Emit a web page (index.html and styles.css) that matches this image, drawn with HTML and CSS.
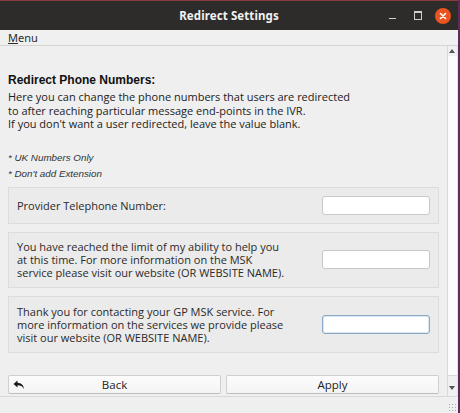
FILE: index.html
```html
<!DOCTYPE html>
<html>
<head>
<meta charset="utf-8">
<link rel="stylesheet" href="styles.css">
</head>
<body>
<div class="window">
  <div class="titlebar">
    <span class="title">Redirect Settings</span>
    <div class="controls">
      <span class="ctl min"></span>
      <span class="ctl max"></span>
      <span class="ctl close">
        <svg width="16" height="16" viewBox="0 0 16 16"><path d="M5.5 5.5 L10.5 10.5 M10.5 5.5 L5.5 10.5" stroke="#fff" stroke-width="1.6" stroke-linecap="round"/></svg>
      </span>
    </div>
  </div>
  <div class="menubar"><span class="menu"><u>M</u>enu</span></div>
  <div class="main">
    <div class="content">
      <h1 class="heading">Redirect Phone Numbers:</h1>
      <p class="intro">Here you can change the phone numbers that users are redirected<br>to after reaching particular message end-points in the IVR.<br>If you don't want a user redirected, leave the value blank.</p>
      <p class="note first">* UK Numbers Only</p>
      <p class="note">* Don't add Extension</p>
      <div class="panel p1">
        <span class="label">Provider Telephone Number:</span>
        <span class="input"></span>
      </div>
      <div class="panel p2">
        <span class="label">You have reached the limit of my ability to help you<br>at this time. For more information on the MSK<br>service please visit our website (OR WEBSITE NAME).</span>
        <span class="input"></span>
      </div>
      <div class="panel p3">
        <span class="label">Thank you for contacting your GP MSK service. For<br>more information on the services we provide please<br>visit our website (OR WEBSITE NAME).</span>
        <span class="input focus"></span>
      </div>
      <div class="buttons">
        <div class="btn back">
          <svg class="back-icon" width="12" height="10" viewBox="0 0 12 10"><path d="M4.5 0.5 L0.5 4 L4.5 7.5 L4.5 5.2 C7.5 5.2 9.5 6.2 11 9 C10.6 5.2 8.2 3 4.5 2.8 Z" fill="#1a1a1a"/></svg>
          <span>Back</span>
        </div>
        <div class="btn apply"><span>Apply</span></div>
      </div>
    </div>
    <div class="scrollbar">
      <div class="arrow up"></div>
      <div class="track"></div>
      <div class="arrow down"></div>
    </div>
  </div>
  <div class="statusbar"><span class="grip"></span></div>
</div>
</body>
</html>
```
FILE: styles.css
```css
html, body {
  margin: 0;
  padding: 0;
  width: 460px;
  height: 413px;
  overflow: hidden;
  background: #efefef;
}
.window {
  width: 460px;
  height: 413px;
  box-sizing: border-box;
  border-right: 2px solid #5e2a5c;
  display: flex;
  flex-direction: column;
  font-family: "Open Sans", "DejaVu Sans", sans-serif;
  color: #2a2a2a;
}
.titlebar {
  height: 30px;
  box-sizing: border-box;
  background: #2d2c2a;
  border-top: 1px solid #8a3b40;
  position: relative;
  display: flex;
  align-items: center;
  justify-content: center;
}
.title {
  color: #f2f2f2;
  font-family: "Noto Sans", "DejaVu Sans", sans-serif;
  font-weight: bold;
  font-size: 11.5px;
  letter-spacing: 0.1px;
}
.controls {
  position: absolute;
  right: 0;
  top: 0;
  height: 29px;
  display: flex;
  align-items: center;
}
.ctl {
  display: block;
  position: relative;
}
.min {
  width: 7px;
  height: 1px;
  background: #cfcfcf;
  margin-right: 18px;
  margin-top: 6px;
}
.max {
  width: 6px;
  height: 6px;
  border: 1px solid #cfcfcf;
  border-top-width: 2px;
  margin-right: 13px;
}
.close {
  width: 16px;
  height: 16px;
  border-radius: 50%;
  background: #e95420;
  margin-right: 7px;
}
.close svg { display: block; }
.menubar {
  height: 16px;
  box-sizing: border-box;
  background: #f0f0f0;
  border-bottom: 1px solid #d4d4d4;
  padding-left: 8px;
  display: flex;
  align-items: center;
}
.menu {
  font-family: "Noto Sans", "DejaVu Sans", sans-serif;
  font-size: 11px;
  color: #2a2a2a;
}
.menu u { text-underline-offset: 1px; }
.main {
  height: 350px;
  display: flex;
  border-bottom: 1px solid #d8d8d8;
}
.content {
  flex: 1;
  padding: 0 8px 0 8px;
  display: flex;
  flex-direction: column;
}
.heading {
  font-family: "Liberation Sans", Arial, sans-serif;
  font-weight: bold;
  font-size: 12px;
  color: #111;
  margin: 27px 0 0 0;
  line-height: 15px;
}
.intro {
  margin: 2px 0 0 0;
  font-size: 11px;
  line-height: 13.6px;
  color: #222;
}
.note {
  font-family: "Liberation Sans", Arial, sans-serif;
  font-style: italic;
  font-size: 9.8px;
  line-height: 12px;
  color: #333;
  margin: 0;
}
.note.first { margin-top: 21px; }
.note + .note { margin-top: 4px; }
.panel {
  background: #ebebeb;
  border: 1px solid #dcdcdc;
  display: flex;
  align-items: center;
  justify-content: space-between;
  padding: 0 8px 0 8px;
  box-sizing: border-box;
}
.p1 { height: 37px; margin-top: 7px; }
.p2 { height: 56px; margin-top: 8px; }
.p3 { height: 57px; margin-top: 8px; }
.label {
  font-size: 11px;
  line-height: 13px;
  color: #2a2a2a;
}
.input {
  display: block;
  width: 108px;
  height: 19px;
  box-sizing: border-box;
  background: #fff;
  border: 1px solid #c8c8c8;
  border-radius: 3px;
  flex: none;
}
.input.focus {
  border-color: #8aa9c8;
  box-shadow: inset 0 0 0 0.5px #b8cde0;
}
.buttons {
  margin-top: 22px;
  display: flex;
  gap: 5px;
}
.btn {
  flex: 1;
  height: 19px;
  box-sizing: border-box;
  border: 1px solid #cfcfcf;
  border-bottom-color: #bdbdbd;
  border-radius: 2px;
  background: linear-gradient(#fcfcfc, #f4f4f4);
  display: flex;
  align-items: center;
  justify-content: center;
  position: relative;
  font-size: 11.5px;
  color: #222;
}
.back-icon {
  position: absolute;
  left: 4px;
  top: 4px;
}
.scrollbar {
  width: 11px;
  box-sizing: border-box;
  border-left: 1px solid #dadada;
  border-right: 1px solid #e4e4e4;
  background: #fbfbfb;
  display: flex;
  flex-direction: column;
}
.arrow {
  height: 10px;
  position: relative;
  background: #f0f0f0;
}
.arrow::after {
  content: "";
  position: absolute;
  left: 1px;
  border-left: 3px solid transparent;
  border-right: 3px solid transparent;
}
.arrow.up::after { top: 3px; border-bottom: 4px solid #555; }
.arrow.down { height: 20px; border-top: 1px solid #d8d8d8; }
.arrow.down::after { top: 10px; border-top: 4px solid #555; }
.track { flex: 1; background: #fbfbfb; }
.statusbar {
  flex: 1;
  background: #efefef;
  position: relative;
}
.grip {
  position: absolute;
  right: 2px;
  bottom: 2px;
  width: 8px;
  height: 8px;
  background: radial-gradient(circle, #aaa 0.6px, transparent 0.8px) 0 0 / 3px 3px;
}
```
